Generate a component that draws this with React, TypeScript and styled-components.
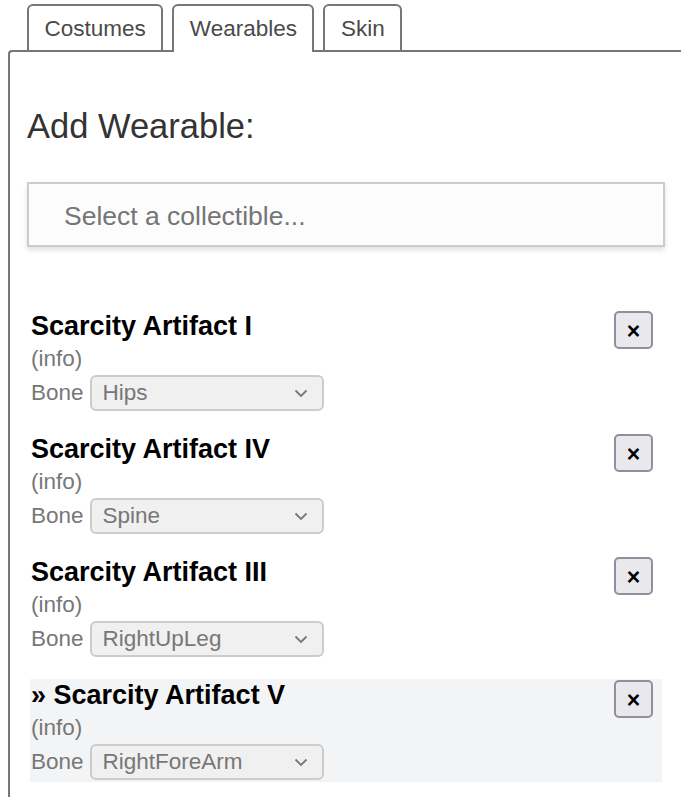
import React from "react";
import styled, { createGlobalStyle } from "styled-components";

const GlobalStyle = createGlobalStyle`
  html, body {
    margin: 0;
    padding: 0;
    background: #ffffff;
    overflow: hidden;
  }
  body {
    font-family: "Liberation Sans", Arial, Helvetica, sans-serif;
  }
`;

const Page = styled.div`
  padding-left: 8px;
  width: 700px;
`;

const TabBar = styled.div`
  display: flex;
  gap: 9px;
  padding: 4px 0 0 19px;
  margin-bottom: -2px;
  position: relative;
  z-index: 1;
`;

const Tab = styled.div<{ $active?: boolean }>`
  height: ${(p) => (p.$active ? "48px" : "46px")};
  margin-bottom: ${(p) => (p.$active ? "0" : "2px")};
  box-sizing: border-box;
  padding: 1px 15.5px ${(p) => (p.$active ? "2px" : "0")};
  display: flex;
  align-items: center;
  border: 2px solid #777777;
  border-bottom: none;
  border-radius: 6px 6px 0 0;
  background: #ffffff;
  font-size: 22.5px;
  color: #4a4a4a;
`;

const Panel = styled.div`
  border-left: 2px solid #777777;
  border-top: 2px solid #777777;
  border-top-left-radius: 4px;
  padding: 54px 0 40px 17px;
  min-height: 760px;
  box-sizing: border-box;
`;

const Heading = styled.h2`
  margin: 0;
  font-size: 34.5px;
  font-weight: normal;
  line-height: 40px;
  color: #333333;
`;

const CollectibleSelect = styled.div`
  margin-top: 36px;
  width: 638px;
  height: 65px;
  box-sizing: border-box;
  border: 2px solid #cccccc;
  background: #fcfcfc;
  box-shadow: 0 3px 5px rgba(0, 0, 0, 0.12);
  display: flex;
  align-items: center;
  padding: 3px 0 0 35px;
  font-size: 26.5px;
  color: #757575;
`;

const ItemList = styled.div`
  margin-top: 63px;
  margin-left: 3px;
  width: 632px;
  display: flex;
  flex-direction: column;
  gap: 20px;
`;

const Item = styled.div<{ $current?: boolean }>`
  position: relative;
  background: ${(p) => (p.$current ? "#f3f4f6" : "transparent")};
  padding-bottom: 2px;
`;

const Title = styled.div`
  font-size: 27px;
  font-weight: bold;
  line-height: 33px;
  color: #000000;
  padding-left: 1px;
`;

const Info = styled.div`
  font-size: 22.5px;
  line-height: 32px;
  color: #777777;
  padding-left: 1px;
`;

const BoneRow = styled.div`
  display: flex;
  align-items: center;
  gap: 6px;
  padding-left: 1px;
`;

const BoneLabel = styled.span`
  font-size: 22.5px;
  color: #777777;
`;

const BoneSelect = styled.div`
  width: 234px;
  height: 36px;
  box-sizing: border-box;
  border: 2px solid #cccccc;
  border-radius: 6px;
  background: #f0f0f0;
  display: flex;
  align-items: center;
  justify-content: space-between;
  padding: 0 14px 0 11px;
  font-size: 22.5px;
  color: #777777;
`;

const CloseButton = styled.button`
  position: absolute;
  top: 1px;
  right: 9px;
  width: 39px;
  height: 38px;
  box-sizing: border-box;
  border: 2px solid #8f8f9d;
  border-radius: 5px;
  background: #e9e9ed;
  display: flex;
  align-items: center;
  justify-content: center;
  padding: 3px 0 0;
  font-family: "Liberation Sans", Arial, sans-serif;
  font-size: 23px;
  font-weight: bold;
  color: #000000;
`;

const Chevron = () => (
  <svg width="14" height="9" viewBox="0 0 14 9" fill="none">
    <path d="M1.5 1.5 L7 7 L12.5 1.5" stroke="#777" strokeWidth="1.8" />
  </svg>
);

const items = [
  { name: "Scarcity Artifact I", bone: "Hips" },
  { name: "Scarcity Artifact IV", bone: "Spine" },
  { name: "Scarcity Artifact III", bone: "RightUpLeg" },
  { name: "Scarcity Artifact V", bone: "RightForeArm", current: true },
];

export default function App() {
  return (
    <Page>
      <GlobalStyle />
      <TabBar>
        <Tab>Costumes</Tab>
        <Tab $active>Wearables</Tab>
        <Tab>Skin</Tab>
      </TabBar>
      <Panel>
        <Heading>Add Wearable:</Heading>
        <CollectibleSelect>Select a collectible...</CollectibleSelect>
        <ItemList>
          {items.map((it) => (
            <Item key={it.name} $current={it.current}>
              <Title>{it.current ? "» " : ""}{it.name}</Title>
              <Info>(info)</Info>
              <BoneRow>
                <BoneLabel>Bone</BoneLabel>
                <BoneSelect>
                  <span>{it.bone}</span>
                  <Chevron />
                </BoneSelect>
              </BoneRow>
              <CloseButton>×</CloseButton>
            </Item>
          ))}
        </ItemList>
      </Panel>
    </Page>
  );
}
